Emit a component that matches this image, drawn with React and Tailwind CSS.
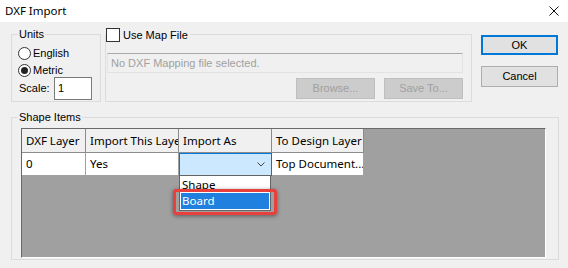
import React from "react";

const ui = { fontFamily: '"Liberation Sans", Arial, sans-serif' };
const grid = { fontFamily: '"Noto Sans", "Open Sans", sans-serif' };

const GroupBox = ({ label, className, children }) => (
  <div className={`relative border border-[#dcdcdc] ${className}`}>
    <span className="absolute left-[6px] top-[-8px] bg-[#f0f0f0] px-[1px] leading-[14px]">
      {label}
    </span>
    {children}
  </div>
);

const Radio = ({ checked, label }) => (
  <div className="flex h-[16px] items-center gap-[2px]">
    <span className="flex h-[13px] w-[13px] items-center justify-center rounded-full border border-[#333] bg-white">
      {checked && <span className="h-[7px] w-[7px] rounded-full bg-[#222]" />}
    </span>
    <span>{label}</span>
  </div>
);

const columns = [
  { title: "DXF Layer", value: "0", width: "w-[64px]" },
  { title: "Import This Layer", value: "Yes", width: "w-[93px]" },
  { title: "Import As", value: "", width: "w-[93px]" },
  { title: "To Design Layer", value: "Top Document...", width: "w-[92px]" },
];

const App = () => {
  return (
    <div className="h-[268px] w-[568px] overflow-hidden bg-[#f0f0f0] text-[11px] text-black" style={ui}>
      {/* title bar */}
      <div className="flex h-[22px] items-center justify-between bg-white pl-[5px] pr-[9px]">
        <span className="text-[11.5px]" style={grid}>
          DXF Import
        </span>
        <svg width="10" height="10" viewBox="0 0 10 10">
          <path d="M0.5 0.5L9.5 9.5M9.5 0.5L0.5 9.5" stroke="#111" strokeWidth="1" />
        </svg>
      </div>

      <div className="pl-[11px]">
        <div className="mt-[12px] flex items-start">
          <GroupBox label="Units" className="h-[68px] w-[90px]">
            <div className="flex flex-col pl-[6px] pt-[10px]">
              <Radio label="English" />
              <div className="mt-[1px]">
                <Radio checked label="Metric" />
              </div>
              <div className="mt-[-1px] flex items-center">
                <span className="ml-[1px] w-[35px]">Scale:</span>
                <div className="flex h-[23px] w-[38px] items-center border border-[#7a7a7a] bg-white pl-[3px]">
                  1
                </div>
              </div>
            </div>
          </GroupBox>

          <div className="relative ml-[4px] h-[68px] w-[367px] border border-[#dcdcdc]">
            <div className="absolute left-[0px] top-[-7px] flex items-center gap-[3px] bg-[#f0f0f0] pr-[2px] leading-[14px]">
              <span className="h-[14px] w-[14px] border border-[#333] bg-white" />
              <span>Use Map File</span>
            </div>
            <div className="ml-[1px] mt-[18px] w-[356px]">
              <div className="flex h-[20px] items-center border border-[#e3e3e3] border-t-[#a9a9a9] pl-[3px] text-[#a0a0a0]">
                No DXF Mapping file selected.
              </div>
              <div className="mt-[5px] flex justify-end gap-[9px]">
                <div className="flex h-[21px] w-[79px] items-center justify-center border border-[#bfbfbf] bg-[#cccccc] text-[#a0a0a0]">
                  Browse...
                </div>
                <div className="flex h-[21px] w-[79px] items-center justify-center border border-[#bfbfbf] bg-[#cccccc] text-[#a0a0a0]">
                  Save To...
                </div>
              </div>
            </div>
          </div>

          <div className="ml-[9px] mt-[1px] flex w-[77px] flex-col">
            <div className="flex h-[20px] items-center justify-center border border-[#0078d7] bg-[#e1e1e1] shadow-[inset_0_0_0_1px_#0078d7]">
              OK
            </div>
            <div className="mt-[11px] flex h-[21px] items-center justify-center border border-[#adadad] bg-[#e1e1e1]">
              Cancel
            </div>
          </div>
        </div>

        <GroupBox label="Shape Items" className="mt-[15px] h-[143px] w-[548px]">
          <div
            className="relative ml-[9px] mt-[10px] h-[130px] w-[525px] border border-[#696969] border-b-white border-r-white bg-[#a0a0a0] text-[11.5px]"
            style={grid}
          >
            <div className="flex h-[24px]">
              {columns.map((c) => (
                <div
                  key={c.title}
                  className={`${c.width} flex items-center overflow-hidden whitespace-nowrap border-b border-r border-[#8c8c8c] bg-[#f0f0f0] pl-[4px]`}
                >
                  {c.title}
                </div>
              ))}
            </div>
            <div className="flex h-[23px]">
              {columns.map((c) =>
                c.title === "Import As" ? (
                  <div
                    key={c.title}
                    className={`${c.width} flex items-center justify-end border border-[#0078d7] bg-[#cce8ff] pr-[6px]`}
                  >
                    <svg width="8" height="5" viewBox="0 0 8 5">
                      <path d="M0.5 0.5L4 4L7.5 0.5" stroke="#444" strokeWidth="1" fill="none" />
                    </svg>
                  </div>
                ) : (
                  <div
                    key={c.title}
                    className={`${c.width} flex items-center overflow-hidden whitespace-nowrap border-b border-r border-[#a0a0a0] bg-white pl-[4px]`}
                  >
                    {c.value}
                  </div>
                )
              )}
            </div>

            {/* open dropdown */}
            <div className="absolute left-[157px] top-[46px] flex h-[36px] w-[92px] flex-col border border-[#646464] bg-white">
              <div className="flex h-[17px] items-center pl-[2px]">Shape</div>
              <div className="mx-[1px] flex h-[16px] items-center bg-[#1f80e0] pl-[1px] text-white">
                Board
              </div>
            </div>
            <div className="absolute left-[151px] top-[60px] h-[26px] w-[104px] rounded-[3px] border-[3px] border-[#e8403c] shadow-[0_1px_4px_rgba(0,0,0,0.45)]" />
          </div>
        </GroupBox>
      </div>
    </div>
  );
};

export default App;
